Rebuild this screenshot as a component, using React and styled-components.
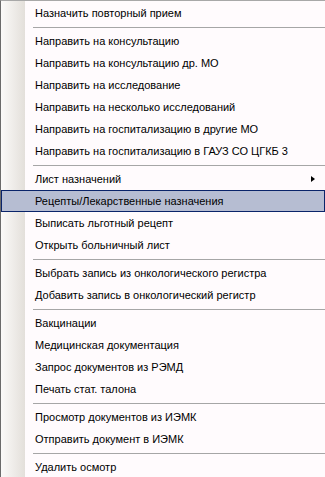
import React from "react";
import styled, { createGlobalStyle } from "styled-components";

const GlobalStyle = createGlobalStyle`
  html, body {
    margin: 0;
    padding: 0;
    background: #ffffff;
  }
`;

const Menu = styled.div`
  width: 325px;
  height: 477px;
  overflow: hidden;
  box-sizing: border-box;
  border-left: 1px solid #6b6b6b;
  border-top: 1px solid #a8a8a8;
  padding-top: 1px;
  background: linear-gradient(to right, #fbfaf9 0, #e3dfda 24px, #fffbfd 24px);
  font-family: "Liberation Sans", Arial, sans-serif;
  font-size: 11px;
  color: #000;
`;

const Item = styled.div`
  height: 22px;
  box-sizing: border-box;
  display: flex;
  align-items: center;
  justify-content: space-between;
  padding-left: ${(p) => (p.$active ? "33px" : "34px")};
  padding-right: 10px;
  border: ${(p) => (p.$active ? "1px solid #0a246a" : "none")};
  background: ${(p) => (p.$active ? "#b6bdd2" : "transparent")};
  white-space: nowrap;
`;

const Separator = styled.div`
  height: 6px;
  padding: 3px 0 0 32px;
  box-sizing: border-box;
  &::after {
    content: "";
    display: block;
    height: 1px;
    background: #a6a6a6;
  }
`;

const Arrow = styled.span`
  width: 0;
  height: 0;
  border-left: 4px solid #000;
  border-top: 3.5px solid transparent;
  border-bottom: 3.5px solid transparent;
`;

const groups = [
  ["Назначить повторный прием"],
  [
    "Направить на консультацию",
    "Направить на консультацию др. МО",
    "Направить на исследование",
    "Направить на несколько исследований",
    "Направить на госпитализацию в другие МО",
    "Направить на госпитализацию в ГАУЗ СО ЦГКБ 3",
  ],
  [
    "Лист назначений",
    "Рецепты/Лекарственные назначения",
    "Выписать льготный рецепт",
    "Открыть больничный лист",
  ],
  [
    "Выбрать запись из онкологического регистра",
    "Добавить запись в онкологический регистр",
  ],
  [
    "Вакцинации",
    "Медицинская документация",
    "Запрос документов из РЭМД",
    "Печать стат. талона",
  ],
  ["Просмотр документов из ИЭМК", "Отправить документ в ИЭМК"],
  ["Удалить осмотр"],
];

const submenu = "Лист назначений";
const active = "Рецепты/Лекарственные назначения";

export default function App() {
  return (
    <>
      <GlobalStyle />
      <Menu>
        {groups.map((group, gi) => (
          <React.Fragment key={gi}>
            {gi > 0 && <Separator />}
            {group.map((label) => (
              <Item key={label} $active={label === active}>
                <span>{label}</span>
                {label === submenu && <Arrow />}
              </Item>
            ))}
          </React.Fragment>
        ))}
      </Menu>
    </>
  );
}
